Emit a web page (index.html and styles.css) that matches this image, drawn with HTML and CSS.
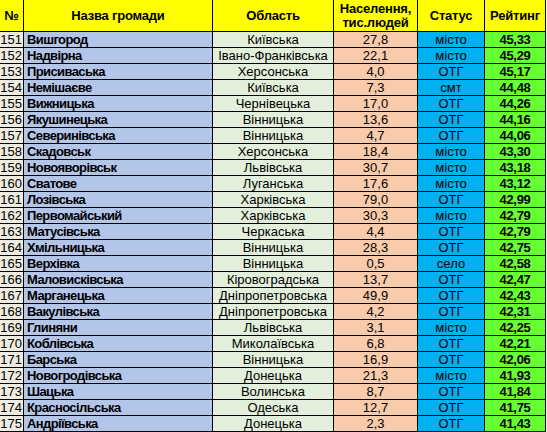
FILE: index.html
```html
<!DOCTYPE html>
<html lang="uk">
<head>
<meta charset="utf-8">
<link rel="stylesheet" href="styles.css">
</head>
<body>
<div class="sheet">
  <div class="hd">№</div><div class="hd">Назва громади</div><div class="hd">Область</div><div class="hd">Населення,<br>тис.людей</div><div class="hd">Статус</div><div class="hd">Рейтинг</div>

  <div class="c n">151</div><div class="c nm">Вишгород</div><div class="c ob">Київська</div><div class="c pop">27,8</div><div class="c st">місто</div><div class="c rt">45,33</div>
  <div class="c n">152</div><div class="c nm">Надвірна</div><div class="c ob">Івано-Франківська</div><div class="c pop">22,1</div><div class="c st">місто</div><div class="c rt">45,29</div>
  <div class="c n">153</div><div class="c nm">Присиваська</div><div class="c ob">Херсонська</div><div class="c pop">4,0</div><div class="c st">ОТГ</div><div class="c rt">45,17</div>
  <div class="c n">154</div><div class="c nm">Немішаєве</div><div class="c ob">Київська</div><div class="c pop">7,3</div><div class="c st">смт</div><div class="c rt">44,48</div>
  <div class="c n">155</div><div class="c nm">Вижницька</div><div class="c ob">Чернівецька</div><div class="c pop">17,0</div><div class="c st">ОТГ</div><div class="c rt">44,26</div>
  <div class="c n">156</div><div class="c nm">Якушинецька</div><div class="c ob">Вінницька</div><div class="c pop">13,6</div><div class="c st">ОТГ</div><div class="c rt">44,16</div>
  <div class="c n">157</div><div class="c nm">Северинівська</div><div class="c ob">Вінницька</div><div class="c pop">4,7</div><div class="c st">ОТГ</div><div class="c rt">44,06</div>
  <div class="c n">158</div><div class="c nm">Скадовськ</div><div class="c ob">Херсонська</div><div class="c pop">18,4</div><div class="c st">місто</div><div class="c rt">43,30</div>
  <div class="c n">159</div><div class="c nm">Новояворівськ</div><div class="c ob">Львівська</div><div class="c pop">30,7</div><div class="c st">місто</div><div class="c rt">43,18</div>
  <div class="c n">160</div><div class="c nm">Сватове</div><div class="c ob">Луганська</div><div class="c pop">17,6</div><div class="c st">місто</div><div class="c rt">43,12</div>
  <div class="c n">161</div><div class="c nm">Лозівська</div><div class="c ob">Харківська</div><div class="c pop">79,0</div><div class="c st">ОТГ</div><div class="c rt">42,99</div>
  <div class="c n">162</div><div class="c nm">Первомайський</div><div class="c ob">Харківська</div><div class="c pop">30,3</div><div class="c st">місто</div><div class="c rt">42,79</div>
  <div class="c n">163</div><div class="c nm">Матусівська</div><div class="c ob">Черкаська</div><div class="c pop">4,4</div><div class="c st">ОТГ</div><div class="c rt">42,79</div>
  <div class="c n">164</div><div class="c nm">Хмільницька</div><div class="c ob">Вінницька</div><div class="c pop">28,3</div><div class="c st">ОТГ</div><div class="c rt">42,75</div>
  <div class="c n">165</div><div class="c nm">Верхівка</div><div class="c ob">Вінницька</div><div class="c pop">0,5</div><div class="c st">село</div><div class="c rt">42,58</div>
  <div class="c n">166</div><div class="c nm">Маловисківська</div><div class="c ob">Кіровоградська</div><div class="c pop">13,7</div><div class="c st">ОТГ</div><div class="c rt">42,47</div>
  <div class="c n">167</div><div class="c nm">Марганецька</div><div class="c ob">Дніпропетровська</div><div class="c pop">49,9</div><div class="c st">ОТГ</div><div class="c rt">42,43</div>
  <div class="c n">168</div><div class="c nm">Вакулівська</div><div class="c ob">Дніпропетровська</div><div class="c pop">4,2</div><div class="c st">ОТГ</div><div class="c rt">42,31</div>
  <div class="c n">169</div><div class="c nm">Глиняни</div><div class="c ob">Львівська</div><div class="c pop">3,1</div><div class="c st">місто</div><div class="c rt">42,25</div>
  <div class="c n">170</div><div class="c nm">Коблівська</div><div class="c ob">Миколаївська</div><div class="c pop">6,8</div><div class="c st">ОТГ</div><div class="c rt">42,21</div>
  <div class="c n">171</div><div class="c nm">Барська</div><div class="c ob">Вінницька</div><div class="c pop">16,9</div><div class="c st">ОТГ</div><div class="c rt">42,06</div>
  <div class="c n">172</div><div class="c nm">Новогродівська</div><div class="c ob">Донецька</div><div class="c pop">21,3</div><div class="c st">місто</div><div class="c rt">41,93</div>
  <div class="c n">173</div><div class="c nm">Шацька</div><div class="c ob">Волинська</div><div class="c pop">8,7</div><div class="c st">ОТГ</div><div class="c rt">41,84</div>
  <div class="c n">174</div><div class="c nm">Красносільська</div><div class="c ob">Одеська</div><div class="c pop">12,7</div><div class="c st">ОТГ</div><div class="c rt">41,75</div>
  <div class="c n">175</div><div class="c nm">Андріївська</div><div class="c ob">Донецька</div><div class="c pop">2,3</div><div class="c st">ОТГ</div><div class="c rt">41,43</div>
</div>
</body>
</html>
```
FILE: styles.css
```css
html, body {
  margin: 0;
  padding: 0;
  background: #ffffff;
}
body {
  font-family: "Liberation Sans", Arial, sans-serif;
  font-size: 13px;
  color: #000;
}
.sheet {
  display: grid;
  grid-template-columns: 23px 188px 120px 83px 66px 60px;
  grid-template-rows: 31px;
  grid-auto-rows: 15px;
  gap: 1px;
  padding: 0 1px 1px 0;
  background: #000;
  width: max-content;
}
.hd {
  background: #ffff00;
  font-weight: bold;
  text-align: center;
  display: flex;
  align-items: center;
  justify-content: center;
  line-height: 14px;
  letter-spacing: -0.2px;
}
.c {
  line-height: 16px;
  white-space: nowrap;
  overflow: hidden;
}
.n {
  background: #eeece1;
  text-align: right;
  padding-right: 1px;
}
.nm {
  background: #b4c6e7;
  font-weight: bold;
  padding-left: 3px;
  letter-spacing: -0.6px;
}
.ob {
  background: #e2efda;
  text-align: center;
}
.pop {
  background: #f8cbad;
  text-align: center;
}
.st {
  background: #00b0f0;
  text-align: center;
}
.rt {
  background: #66ff33;
  text-align: center;
  font-weight: bold;
  letter-spacing: -0.3px;
}
```
